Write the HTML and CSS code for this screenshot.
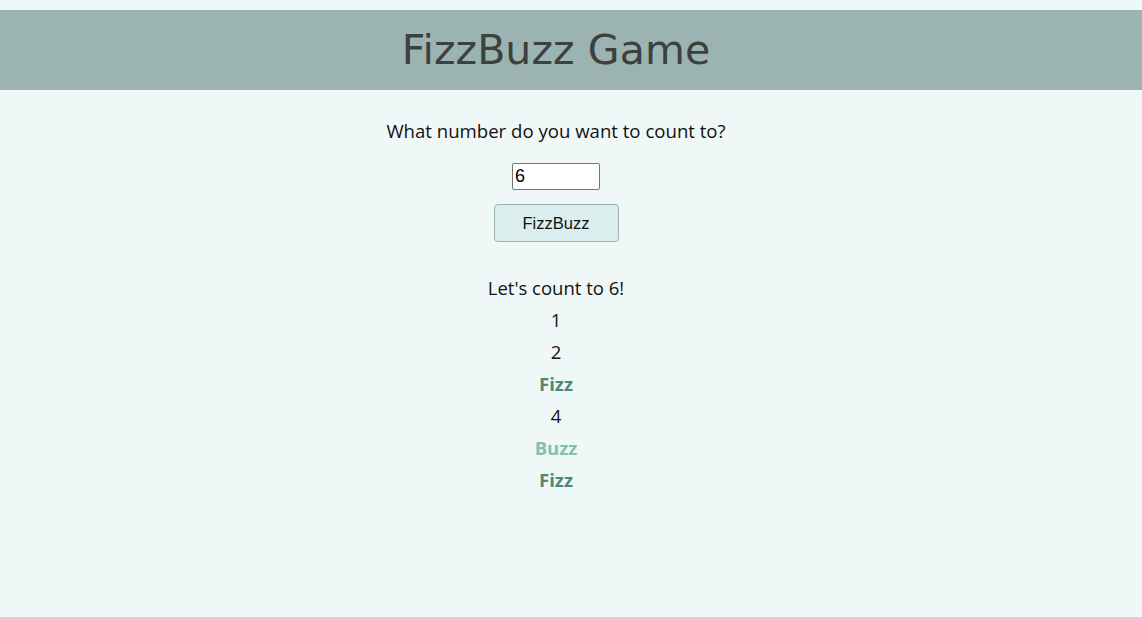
FILE: index.html
```html
<!DOCTYPE html>
<html>
<head>
<meta charset="utf-8">
<link rel="stylesheet" href="styles.css">
</head>
<body>
<header class="banner"><h1 class="title">FizzBuzz Game</h1></header>
<main class="game">
  <p class="prompt">What number do you want to count to?</p>
  <input class="num" type="text" value="6">
  <button class="go">FizzBuzz</button>
  <div class="results">
    <p class="line">Let's count to 6!</p>
    <p class="line">1</p>
    <p class="line">2</p>
    <p class="line fizz">Fizz</p>
    <p class="line">4</p>
    <p class="line buzz">Buzz</p>
    <p class="line fizz">Fizz</p>
  </div>
</main>
</body>
</html>
```
FILE: styles.css
```css
html, body { margin: 0; padding: 0; background: #f0f8f7; }
body { padding-top: 10px; font-family: "Open Sans", "Noto Sans", sans-serif; color: #111; }
.banner { background: #9cb4b1; height: 80px; display: flex; align-items: center; justify-content: center; padding-right: 30px; }
.title { margin: 0; font-family: "DejaVu Sans", sans-serif; font-weight: 400; font-size: 41px; color: #3c413f; letter-spacing: 0.1px; }
.game { display: flex; flex-direction: column; align-items: center; padding-right: 30px; }
.prompt { margin: 28px 0 0; font-size: 18.6px; line-height: 26px; }
.num { box-sizing: border-box; margin-top: 19px; width: 88px; height: 27px; padding: 1px 2px; border: 1px solid #767676; border-radius: 2px; font-family: "Liberation Sans", Arial, sans-serif; font-size: 18px; }
.go { box-sizing: border-box; margin-top: 14px; width: 125px; height: 38px; background: #daeeed; border: 1px solid #9cb4b1; border-radius: 4px; font-family: "Liberation Sans", Arial, sans-serif; font-size: 16.5px; color: #111; }
.results { margin-top: 30px; display: flex; flex-direction: column; align-items: center; }
.line { margin: 0; font-size: 18.5px; line-height: 32px; }
.fizz { color: #4a8a78; font-weight: 700; }
.buzz { color: #7cc4b0; font-weight: 700; }
```
